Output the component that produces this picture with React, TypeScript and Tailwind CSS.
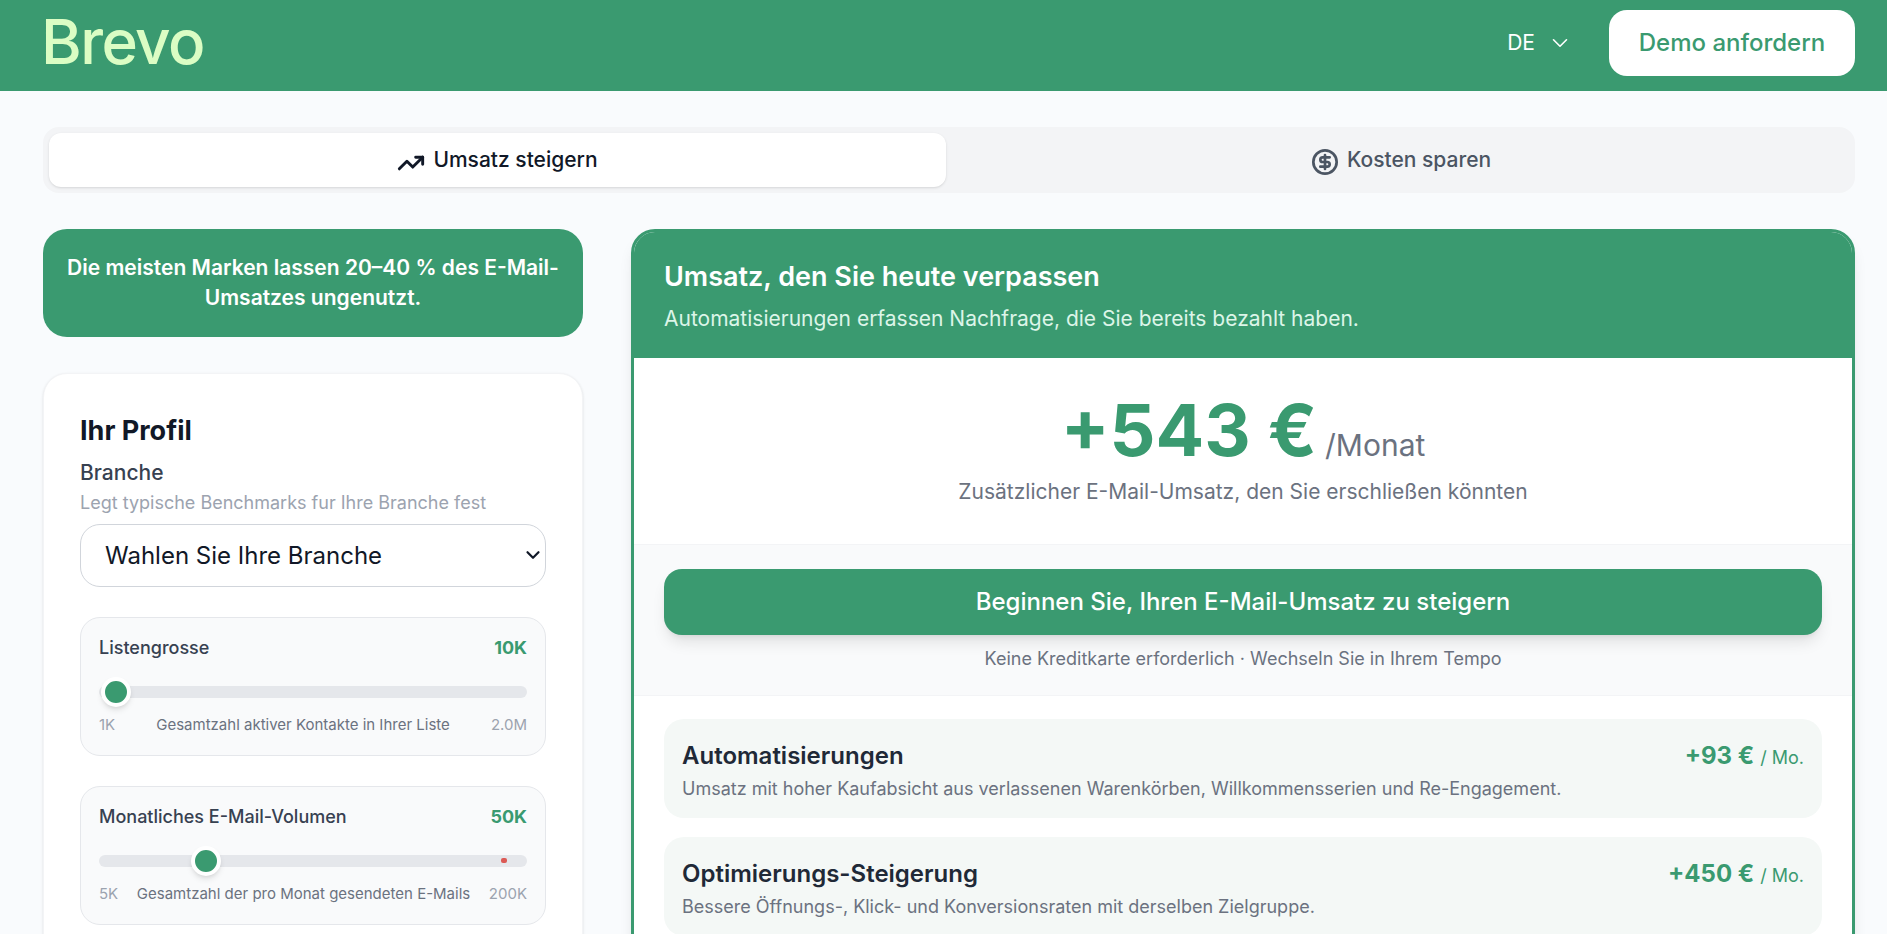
import { ChevronDown, CircleDollarSign, TrendingUp } from "lucide-react";

const FONT = "font-['Inter','Liberation_Sans',sans-serif]";

const SliderCard = ({
  label,
  value,
  min,
  max,
  hint,
  thumbLeft,
  flaw,
}: {
  label: string;
  value: string;
  min: string;
  max: string;
  hint: string;
  thumbLeft: string;
  flaw?: boolean;
}) => (
  <div className="rounded-[20px] border border-[#e5e7eb] bg-[#f9fafb] px-[18px] pt-[16px] pb-[19px]">
    <div className="flex items-center justify-between text-[18px] leading-[28px]">
      <span className="font-medium text-[#374151]">{label}</span>
      <span className="font-bold text-[#3a9a70]">{value}</span>
    </div>
    <div className="relative mt-[24px] h-3 rounded-full bg-[#e5e7eb]">
      <div
        className={`absolute top-1/2 size-[30px] -translate-x-1/2 -translate-y-1/2 rounded-full border-4 border-white bg-[#3a9a70] shadow-md ${thumbLeft}`}
      />
      {flaw && <div className="absolute top-[3px] left-[402px] h-[5px] w-[6px] rounded-[2px] bg-[#dc5a55]" />}
    </div>
    <div className="mt-[16px] flex items-center justify-between text-[15px] leading-[22px] text-[#9ca3af]">
      <span>{min}</span>
      <span className="text-[#6b7280]">{hint}</span>
      <span>{max}</span>
    </div>
  </div>
);

const UpliftRow = ({ title, text, amount }: { title: string; text: string; amount: string }) => (
  <div className="flex items-start justify-between rounded-[20px] bg-[#f4f8f6] px-[18px] pt-[21px] pb-[15px]">
    <div>
      <div className="text-[24px] leading-[32px] font-semibold text-[#1f2937]">{title}</div>
      <div className="mt-[3px] text-[18px] leading-[28px] text-[#6b7280]">{text}</div>
    </div>
    <div className="leading-[32px] text-[#3a9a70]">
      <span className="text-[24px] font-bold">{amount}</span>
      <span className="ml-[6px] text-[18px]">/ Mo.</span>
    </div>
  </div>
);

export default function App() {
  return (
    <div className={`${FONT} h-screen overflow-hidden bg-[#f9fbfd]`}>
      <header className="flex h-[91px] items-start justify-between bg-[#3a9a70] pt-[10px] pr-[32px] pl-[41px]">
        <span className="font-['Inter',sans-serif] text-[62px] leading-[64px] font-medium tracking-[-0.025em] text-[#dbfdc4]">
          Brevo
        </span>
        <div className="flex items-center">
          <span className="text-[21px] text-white">DE</span>
          <ChevronDown className="ml-[12px] size-[26px] text-white" strokeWidth={1.5} />
          <button className="ml-[36px] h-[66px] w-[246px] rounded-[18px] bg-white text-[24px] font-medium text-[#3a9a70]">
            Demo anfordern
          </button>
        </div>
      </header>

      <main className="pt-[36px] pr-[32px] pl-[43px]">
        <div className="grid h-[66px] grid-cols-[897px_1fr] rounded-[16px] bg-[#f3f4f6] p-[6px]">
          <div className="flex items-center justify-center rounded-[12px] bg-white text-[21px] font-medium text-[#111827] shadow-sm">
            <TrendingUp className="mt-[5px] mr-[8px] size-[28px]" strokeWidth={2.5} />
            Umsatz steigern
          </div>
          <div className="flex items-center justify-center pl-[7px] text-[21px] font-medium text-[#4b5563]">
            <CircleDollarSign className="mt-[3px] mr-[8px] size-[28px]" strokeWidth={2.3} />
            Kosten sparen
          </div>
        </div>

        <div className="mt-[36px] grid grid-cols-[540px_1fr] gap-[48px]">
          <aside className="flex flex-col gap-[36px]">
            <div className="flex h-[108px] items-center justify-center rounded-[24px] bg-[#3a9a70] px-[20px] text-center text-[21px] leading-[30px] font-semibold text-white">
              Die meisten Marken lassen 20–40 % des E-Mail-Umsatzes ungenutzt.
            </div>

            <section className="rounded-[24px] border border-[#f3f4f6] bg-white px-[36px] pt-[39px] pb-[40px] shadow-sm">
              <h2 className="text-[27px] leading-[36px] font-bold text-[#111827]">Ihr Profil</h2>
              <div className="mt-[10px] text-[21px] leading-[28px] font-medium text-[#374151]">Branche</div>
              <div className="mt-[4px] text-[18px] leading-[24px] text-[#9ca3af]">
                Legt typische Benchmarks fur Ihre Branche fest
              </div>
              <div className="relative mt-[9px]">
                <select className="block h-[63px] w-full appearance-none rounded-[20px] border border-[#d1d5db] bg-white pr-[24px] pl-[24px] text-[24px] text-[#111827]">
                  <option>Wahlen Sie Ihre Branche</option>
                </select>
                <ChevronDown
                  className="pointer-events-none absolute top-[20px] right-[2px] size-[22px] text-[#111827]"
                  strokeWidth={2.4}
                />
              </div>
              <div className="mt-[30px] flex flex-col gap-[30px]">
                <SliderCard
                  label="Listengrosse"
                  value="10K"
                  min="1K"
                  max="2.0M"
                  hint="Gesamtzahl aktiver Kontakte in Ihrer Liste"
                  thumbLeft="left-[17px]"
                />
                <SliderCard
                  label="Monatliches E-Mail-Volumen"
                  value="50K"
                  min="5K"
                  max="200K"
                  hint="Gesamtzahl der pro Monat gesendeten E-Mails"
                  thumbLeft="left-[107px]"
                  flaw
                />
              </div>
            </section>
          </aside>

          <section className="overflow-hidden rounded-[24px] border-[3px] border-[#3a9a70] bg-white shadow-lg">
            <div className="-mt-px h-[127px] bg-[#3a9a70] px-[30px] pt-[28px]">
              <h2 className="text-[27px] leading-[36px] font-semibold text-white">Umsatz, den Sie heute verpassen</h2>
              <p className="mt-[10px] text-[21px] leading-[28px] text-[#dcf5e8]">
                Automatisierungen erfassen Nachfrage, die Sie bereits bezahlt haben.
              </p>
            </div>
            <div className="h-[186px] pt-[28px] text-center">
              <div className="h-[88px] leading-[88px]">
                <span className="text-[72px] font-bold text-[#3a9a70]">+543 €</span>
                <span className="ml-[8px] text-[30px] text-[#6b7280]">/Monat</span>
              </div>
              <p className="mt-[4px] text-[21px] leading-[28px] text-[#6b7280]">
                Zusätzlicher E-Mail-Umsatz, den Sie erschließen könnten
              </p>
            </div>
            <div className="h-[152px] border-y border-[#f3f4f6] bg-[#f9fafb] px-[30px] pt-[24px]">
              <button className="h-[66px] w-full rounded-[18px] bg-[#3a9a70] text-[24px] font-medium text-white shadow-lg">
                Beginnen Sie, Ihren E-Mail-Umsatz zu steigern
              </button>
              <p className="mt-[11px] text-center text-[18px] leading-[26px] text-[#6b7280]">
                Keine Kreditkarte erforderlich · Wechseln Sie in Ihrem Tempo
              </p>
            </div>
            <div className="flex flex-col gap-[19px] px-[30px] pt-[23px]">
              <UpliftRow
                title="Automatisierungen"
                text="Umsatz mit hoher Kaufabsicht aus verlassenen Warenkörben, Willkommensserien und Re-Engagement."
                amount="+93 €"
              />
              <UpliftRow
                title="Optimierungs-Steigerung"
                text="Bessere Öffnungs-, Klick- und Konversionsraten mit derselben Zielgruppe."
                amount="+450 €"
              />
            </div>
          </section>
        </div>
      </main>
    </div>
  );
}
